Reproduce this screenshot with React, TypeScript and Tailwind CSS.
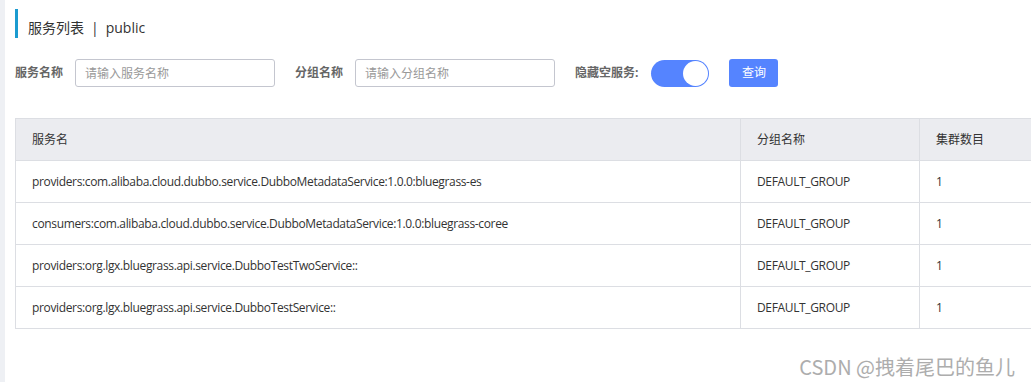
import React from 'react';

const rows = [
  ['providers:com.alibaba.cloud.dubbo.service.DubboMetadataService:1.0.0:bluegrass-es', 'DEFAULT_GROUP', '1'],
  ['consumers:com.alibaba.cloud.dubbo.service.DubboMetadataService:1.0.0:bluegrass-coree', 'DEFAULT_GROUP', '1'],
  ['providers:org.lgx.bluegrass.api.service.DubboTestTwoService::', 'DEFAULT_GROUP', '1'],
  ['providers:org.lgx.bluegrass.api.service.DubboTestService::', 'DEFAULT_GROUP', '1'],
];

const font = { fontFamily: '"Open Sans", "Noto Sans CJK SC", sans-serif' };

export default function App() {
  return (
    <div className="relative flex w-[1031px] h-[382px] overflow-hidden bg-white text-[#333]" style={font}>
      {/* sidebar edge */}
      <div className="w-[5px] shrink-0 bg-[#eef0f4]" />

      <div className="flex-1 pl-[10px] pt-[9px]">
        {/* Title */}
        <div className="flex items-end h-[29px] border-l-[3px] border-[#1b9bd0] pl-[10px] pb-[3px] text-[14px] leading-none">
          <span>服务列表</span>
          <span className="mx-[7px]">|</span>
          <span>public</span>
        </div>

        {/* Search form */}
        <div className="flex items-center mt-[21px] h-[28px] text-[12px]">
          <label className="font-bold text-[#666] w-[60px]">服务名称</label>
          <input
            className="w-[200px] h-[28px] border border-[#c4c6cf] rounded-[3px] px-[9px] text-[12px] placeholder:text-[#999] outline-none"
            placeholder="请输入服务名称"
          />
          <label className="font-bold text-[#666] ml-[20px] w-[60px]">分组名称</label>
          <input
            className="w-[200px] h-[28px] border border-[#c4c6cf] rounded-[3px] px-[9px] text-[12px] placeholder:text-[#999] outline-none"
            placeholder="请输入分组名称"
          />
          <label className="font-bold text-[#666] ml-[20px]">隐藏空服务:</label>
          <div className="ml-[13px] w-[58px] h-[27px] rounded-full bg-[#5584ff] flex items-center justify-end pr-[1px]">
            <div className="w-[25px] h-[25px] rounded-full bg-white" />
          </div>
          <button className="ml-[20px] w-[49px] h-[28px] rounded-[3px] bg-[#5584ff] text-white text-[12px]">查询</button>
        </div>

        {/* Table */}
        <table className="mt-[31px] border-collapse text-[12px] table-fixed w-[1200px] tracking-[-0.35px]">
          <colgroup>
            <col className="w-[725px]" />
            <col className="w-[179px]" />
            <col className="w-[296px]" />
          </colgroup>
          <thead>
            <tr className="bg-[#ebecf0] h-[42px]">
              <th className="border border-[#dcdee3] text-left font-normal pl-[16px] tracking-normal">服务名</th>
              <th className="border border-[#dcdee3] text-left font-normal pl-[16px] tracking-normal">分组名称</th>
              <th className="border border-[#dcdee3] text-left font-normal pl-[16px] tracking-normal">集群数目</th>
            </tr>
          </thead>
          <tbody>
            {rows.map((r) => (
              <tr key={r[0]} className="h-[42px]">
                <td className="border border-[#dcdee3] pl-[16px]">{r[0]}</td>
                <td className="border border-[#dcdee3] pl-[16px]">{r[1]}</td>
                <td className="border border-[#dcdee3] pl-[16px]">{r[2]}</td>
              </tr>
            ))}
          </tbody>
        </table>
      </div>

      {/* watermark */}
      <div className="absolute right-[16px] bottom-[5px] text-[20px] text-[#adadad] leading-none" style={{ fontFamily: '"Noto Sans CJK SC", sans-serif' }}>
        CSDN @拽着尾巴的鱼儿
      </div>
    </div>
  );
}
